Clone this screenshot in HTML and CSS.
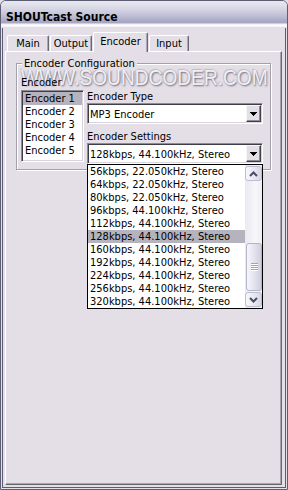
FILE: index.html
```html
<!DOCTYPE html>
<html>
<head>
<meta charset="utf-8">
<link rel="stylesheet" href="styles.css">
</head>
<body>
<div class="window">
  <div class="titlebar"><span class="title">SHOUTcast Source</span></div>
  <div class="client">
    <div class="tabs">
      <div class="tab t-main">Main</div>
      <div class="tab t-output">Output</div>
      <div class="tab t-encoder active">Encoder</div>
      <div class="tab t-input">Input</div>
    </div>
    <div class="panel">
      <div class="group">
        <div class="group-title">Encoder Configuration</div>
        <div class="watermark">WWW.SOUNDCODER.COM</div>
        <div class="group-grid">
          <div class="label">Encoder</div>
          <div></div>
          <div class="listbox">
            <div class="item sel">Encoder 1</div>
            <div class="item">Encoder 2</div>
            <div class="item">Encoder 3</div>
            <div class="item">Encoder 4</div>
            <div class="item">Encoder 5</div>
          </div>
          <div class="right-col">
            <div class="label">Encoder Type</div>
            <div class="combo">
              <span class="combo-text">MP3 Encoder</span>
              <span class="combo-btn"><svg width="7" height="4" viewBox="0 0 7 4" shape-rendering="crispEdges"><path d="M0 0h7v1h-1v1h-1v1h-1v1h-1v-1h-1v-1h-1v-1h-1z" fill="#000"/></svg></span>
            </div>
            <div class="label label2">Encoder Settings</div>
            <div class="combo">
              <span class="combo-text">128kbps, 44.100kHz, Stereo</span>
              <span class="combo-btn"><svg width="7" height="4" viewBox="0 0 7 4" shape-rendering="crispEdges"><path d="M0 0h7v1h-1v1h-1v1h-1v1h-1v-1h-1v-1h-1v-1h-1z" fill="#000"/></svg></span>
              <div class="droplist">
                <div class="drop-items">
                  <div class="ditem">56kbps, 22.050kHz, Stereo</div>
                  <div class="ditem">64kbps, 22.050kHz, Stereo</div>
                  <div class="ditem">80kbps, 22.050kHz, Stereo</div>
                  <div class="ditem">96kbps, 44.100kHz, Stereo</div>
                  <div class="ditem">112kbps, 44.100kHz, Stereo</div>
                  <div class="ditem sel">128kbps, 44.100kHz, Stereo</div>
                  <div class="ditem">160kbps, 44.100kHz, Stereo</div>
                  <div class="ditem">192kbps, 44.100kHz, Stereo</div>
                  <div class="ditem">224kbps, 44.100kHz, Stereo</div>
                  <div class="ditem">256kbps, 44.100kHz, Stereo</div>
                  <div class="ditem">320kbps, 44.100kHz, Stereo</div>
                </div>
                <div class="scrollbar">
                  <div class="sb-btn"><svg width="9" height="6" viewBox="0 0 9 6"><path d="M1 5L4.5 1.5L8 5" fill="none" stroke="#4b4b69" stroke-width="2"/></svg></div>
                  <div class="sb-track">
                    <div class="sb-thumb"><svg width="7" height="8" viewBox="0 0 7 8"><path d="M0 .5h7M0 2.5h7M0 4.5h7M0 6.5h7" stroke="#a2a2b8"/><path d="M0 1.5h7M0 3.5h7M0 5.5h7M0 7.5h7" stroke="#ffffff"/></svg></div>
                  </div>
                  <div class="sb-btn"><svg width="9" height="6" viewBox="0 0 9 6"><path d="M1 1L4.5 4.5L8 1" fill="none" stroke="#4b4b69" stroke-width="2"/></svg></div>
                </div>
              </div>
            </div>
          </div>
        </div>
      </div>
    </div>
  </div>
</div>
</body>
</html>
```
FILE: styles.css
```css
* { box-sizing: border-box; }
html, body { margin: 0; padding: 0; }
body {
  width: 288px;
  height: 490px;
  overflow: hidden;
  background: #e4dfe7;
  font-family: "DejaVu Sans Condensed", "DejaVu Sans", sans-serif;
  font-stretch: condensed;
  font-size: 11px;
  line-height: 13px;
  color: #000;
}
.window {
  width: 288px;
  height: 490px;
  border: 1px solid #5c5c72;
  border-radius: 6px 6px 0 0;
  background: #e4dfe7;
  display: flex;
  flex-direction: column;
  overflow: hidden;
}
.titlebar {
  flex: none;
  height: 27px;
  padding: 9px 0 0 5px;
  background: linear-gradient(to bottom, #e8e8f0 0%, #dedeea 20%, #c4c4d8 50%, #acacc8 72%, #a6a6c4 80%, #eeeef4 86%, #ffffff 91%, #dcd8e2 100%);
}
.title {
  font-weight: bold;
  font-size: 12px;
  line-height: 14px;
}
.client {
  flex: 1;
  margin: 0 1px 1px;
  border: 1px solid #5c5c72;
  border-top: 0;
  display: flex;
  flex-direction: column;
}
.tabs {
  flex: none;
  height: 23px;
  padding: 4px 0 0 4px;
  display: flex;
  align-items: flex-end;
}
.tab {
  height: 16px;
  padding-top: 1px;
  text-align: center;
  border-top: 1px solid #fff;
  border-left: 1px solid #fff;
  border-right: 1px solid #6a6a74;
  border-radius: 2px 2px 0 0;
  box-shadow: inset -1px 0 #aaa6b2;
  background: #e4dfe7;
  margin-right: 1px;
}
.t-main { width: 42px; }
.t-output { width: 42px; }
.t-encoder { width: 55px; }
.t-input { width: 40px; margin-right: 0; }
.tab.active {
  height: 20px;
  margin-bottom: -1px;
  padding-top: 2px;
  position: relative;
  z-index: 2;
}
.panel {
  flex: 1;
  margin: 0 3px 2px 2px;
  border-top: 1px solid #fff;
  border-left: 1px solid #fff;
  border-right: 1px solid #66666e;
  border-bottom: 1px solid #66666e;
  box-shadow: inset -1px -1px #a8a4ae;
}
.group {
  position: relative;
  margin: 11px 0 0 10px;
  width: 255px;
  border: 1px solid #a4a0ac;
  box-shadow: inset 1px 1px #fff, 1px 1px #fff;
  padding: 0 7px 5px 4px;
}
.group-title {
  width: fit-content;
  margin: -7px 0 0 1px;
  padding: 0 2px;
  background: #e4dfe7;
  position: relative;
  z-index: 1;
}
.watermark {
  position: absolute;
  left: 4px;
  top: 4px;
  font-family: "Liberation Sans", Arial, sans-serif;
  font-stretch: normal;
  font-size: 22px;
  line-height: 20px;
  white-space: nowrap;
  color: rgba(252, 250, 254, 0.9);
  text-shadow: 1px 1px 2px rgba(70, 68, 82, 0.75), -1px -1px 1px rgba(140, 138, 152, 0.4);
  transform: scaleX(0.87);
  transform-origin: left top;
  z-index: 0;
}
.group-grid {
  position: relative;
  z-index: 1;
  margin-top: 6px;
  display: grid;
  grid-template-columns: 63px 176px;
  column-gap: 3px;
  row-gap: 1px;
}
.label { white-space: nowrap; }
.label2 { margin-top: 6px; }
.listbox {
  height: 72px;
  background: #fff;
  border: 1px solid;
  border-color: #8e8a96 #fff #fff #8e8a96;
  box-shadow: inset 1px 1px #3e3e46, inset -1px -1px #d8d4dc;
  padding: 1px;
}
.item {
  height: 13px;
  padding-left: 2px;
  white-space: nowrap;
}
.sel { background: #b5b3bd; }
.combo {
  position: relative;
  height: 21px;
  background: #fff;
  border: 1px solid;
  border-color: #8e8a96 #fff #fff #8e8a96;
  box-shadow: inset 1px 1px #3e3e46, inset -1px -1px #d8d4dc;
  padding: 1px;
  display: flex;
}
.combo-text {
  flex: 1;
  padding: 3px 0 0 1px;
  white-space: nowrap;
  overflow: hidden;
}
.combo-btn {
  width: 15px;
  display: flex;
  align-items: center;
  justify-content: center;
  background: #e4dfe7;
  border: 1px solid;
  border-color: #f6f4f8 #404048 #404048 #f6f4f8;
  box-shadow: inset -1px -1px #8e8a96;
}
.combo-btn svg { display: block; }
.droplist {
  position: absolute;
  top: calc(100% + 1px);
  left: -1px;
  width: 176px;
  height: 145px;
  border: 1px solid #000;
  background: #fff;
  display: flex;
  z-index: 5;
}
.drop-items {
  flex: 1;
  overflow: hidden;
}
.ditem {
  height: 13px;
  padding-left: 2px;
  white-space: nowrap;
}
.scrollbar {
  width: 17px;
  display: flex;
  flex-direction: column;
  background: linear-gradient(to right, #ebe9f1, #f7f6fa 60%, #efeef4);
}
.sb-btn {
  flex: none;
  height: 15px;
  margin: 1px 0;
  border: 1px solid #bcbcd2;
  border-radius: 3px;
  background: linear-gradient(to right, #f8f8fb, #e6e6ef 60%, #d6d6e4);
  display: flex;
  align-items: center;
  justify-content: center;
}
.sb-btn svg, .sb-thumb svg { display: block; }
.sb-track {
  flex: 1;
  display: flex;
  flex-direction: column;
  justify-content: flex-end;
}
.sb-thumb {
  height: 48px;
  margin: 0 0 0 1px;
  border: 1px solid #b4b4ca;
  border-radius: 3px;
  background: linear-gradient(to right, #f6f6fa, #e2e2ec 55%, #cfcfdf);
  display: flex;
  align-items: center;
  justify-content: center;
}
```
